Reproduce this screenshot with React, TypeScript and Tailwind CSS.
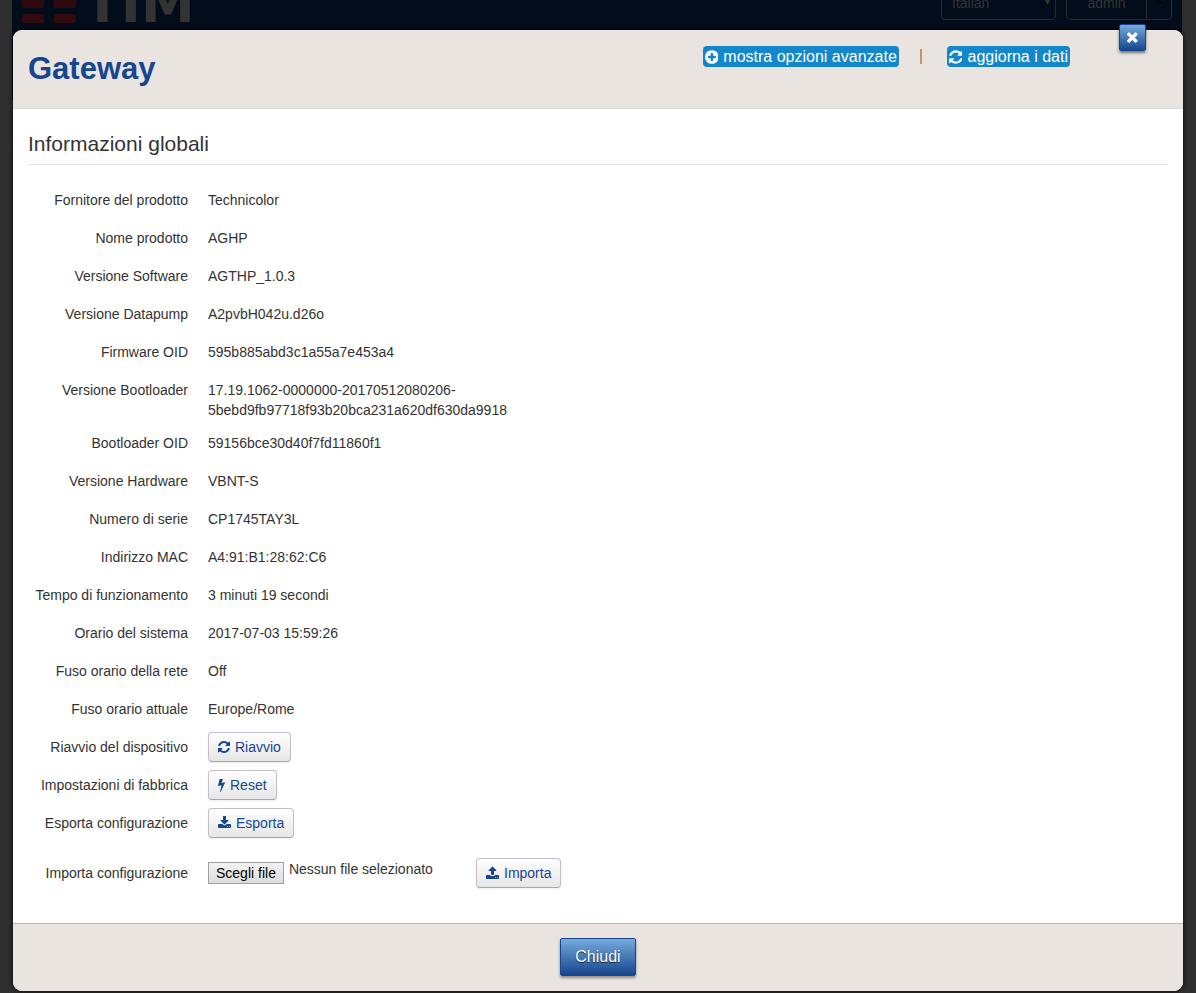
import type { ReactNode } from "react";

const ICONS = {
  refresh: {
    w: 1536,
    d: "M1511 1056q0 5-1 7-64 268-268 434.5t-478 166.5q-146 0-282.5-55t-243.5-157l-129 129q-19 19-45 19t-45-19-19-45v-448q0-26 19-45t45-19h448q26 0 45 19t19 45-19 45l-137 137q71 66 161 102t187 36q134 0 250-65t186-179q11-17 53-117 8-23 30-23h192q13 0 22.5 9.5t9.5 22.5zm25-800v448q0 26-19 45t-45 19h-448q-26 0-45-19t-19-45 19-45l138-138q-148-137-349-137-134 0-250 65t-186 179q-11 17-53 117-8 23-30 23h-199q-13 0-22.5-9.5t-9.5-22.5v-7q65-268 270-434.5t480-166.5q146 0 284 55.5t245 156.5l130-129q19-19 45-19t45 19 19 45z",
  },
  plus: {
    w: 1536,
    d: "M1216 960v-128q0-26-19-45t-45-19h-256v-256q0-26-19-45t-45-19h-128q-26 0-45 19t-19 45v256h-256q-26 0-45 19t-19 45v128q0 26 19 45t45 19h256v256q0 26 19 45t45 19h128q26 0 45-19t19-45v-256h256q26 0 45-19t19-45zm320-64q0 209-103 385.5t-279.5 279.5-385.5 103-385.5-103-279.5-279.5-103-385.5 103-385.5 279.5-279.5 385.5-103 385.5 103 279.5 279.5 103 385.5z",
  },
  times: {
    w: 1408,
    d: "M1298 1322q0 40-28 68l-136 136q-28 28-68 28t-68-28l-294-294-294 294q-28 28-68 28t-68-28l-136-136q-28-28-28-68t28-68l294-294-294-294q-28-28-28-68t28-68l136-136q28-28 68-28t68 28l294 294 294-294q28-28 68-28t68 28l136 136q28 28 28 68t-28 68l-294 294 294 294q28 28 28 68z",
  },
  bolt: {
    w: 896,
    d: "M885 566q18 20 7 44l-540 1157q-13 25-42 25-4 0-14-2-17-5-25.5-19t-4.5-30l197-808-406 101q-4 1-12 1-18 0-31-11-18-15-13-39l201-825q4-14 16-23t28-9h328q19 0 32 12.5t13 29.5q0 8-5 18l-171 463 396-98q8-2 12-2 19 0 34 15z",
  },
  download: {
    w: 1664,
    d: "M1280 1344q0-26-19-45t-45-19-45 19-19 45 19 45 45 19 45-19 19-45zm256 0q0-26-19-45t-45-19-45 19-19 45 19 45 45 19 45-19 19-45zm128-224v320q0 40-28 68t-68 28h-1472q-40 0-68-28t-28-68v-320q0-40 28-68t68-28h465l135 136q58 56 136 56t136-56l136-136h464q40 0 68 28t28 68zm-325-569q17 41-14 70l-448 448q-18 19-45 19t-45-19l-448-448q-31-29-14-70 17-39 59-39h256v-448q0-26 19-45t45-19h256q26 0 45 19t19 45v448h256q42 0 59 39z",
  },
  upload: {
    w: 1664,
    d: "M1280 1472q0-26-19-45t-45-19-45 19-19 45 19 45 45 19 45-19 19-45zm256 0q0-26-19-45t-45-19-45 19-19 45 19 45 45 19 45-19 19-45zm128-224v320q0 40-28 68t-68 28h-1472q-40 0-68-28t-28-68v-320q0-40 28-68t68-28h427q21 56 70.5 92t110.5 36h256q61 0 110.5-36t70.5-92h427q40 0 68 28t28 68zm-325-648q-17 40-59 40h-256v448q0 26-19 45t-45 19h-256q-26 0-45-19t-19-45v-448h-256q-42 0-59-40-17-39 14-69l448-448q18-19 45-19t45 19l448 448q31 30 14 69z",
  },
};

type IconName = keyof typeof ICONS;

function Icon({ name, className }: { name: IconName; className: string }) {
  const icon = ICONS[name];
  return (
    <svg viewBox={`0 0 ${icon.w} 1792`} fill="currentColor" aria-hidden="true" className={`w-auto shrink-0 ${className}`}>
      <path d={icon.d} />
    </svg>
  );
}

const INFO: [string, string[]][] = [
  ["Fornitore del prodotto", ["Technicolor"]],
  ["Nome prodotto", ["AGHP"]],
  ["Versione Software", ["AGTHP_1.0.3"]],
  ["Versione Datapump", ["A2pvbH042u.d26o"]],
  ["Firmware OID", ["595b885abd3c1a55a7e453a4"]],
  ["Versione Bootloader", ["17.19.1062-0000000-20170512080206-", "5bebd9fb97718f93b20bca231a620df630da9918"]],
  ["Bootloader OID", ["59156bce30d40f7fd11860f1"]],
  ["Versione Hardware", ["VBNT-S"]],
  ["Numero di serie", ["CP1745TAY3L"]],
  ["Indirizzo MAC", ["A4:91:B1:28:62:C6"]],
  ["Tempo di funzionamento", ["3 minuti 19 secondi"]],
  ["Orario del sistema", ["2017-07-03 15:59:26"]],
  ["Fuso orario della rete", ["Off"]],
  ["Fuso orario attuale", ["Europe/Rome"]],
];

function Row({ label, htmlFor, children }: { label: string; htmlFor?: string; children: ReactNode }) {
  return (
    <div className="mb-2 flex min-h-[30px] gap-5">
      {htmlFor ? (
        <label htmlFor={htmlFor} className="w-40 shrink-0 pt-[5px] text-right">{label}</label>
      ) : (
        <span className="w-40 shrink-0 pt-[5px] text-right">{label}</span>
      )}
      {children}
    </div>
  );
}

function ActionButton({ id, icon, children }: { id?: string; icon: IconName; children: ReactNode }) {
  return (
    <button
      id={id}
      type="button"
      className="flex h-[30px] items-center gap-[5px] rounded-[4px] border border-[#c6bccb] border-b-[#ae9fb5] bg-linear-to-b from-white to-[#e6e6e6] px-[9px] text-[#17468f] shadow-[0_1px_2px_rgba(0,0,0,0.08)]"
    >
      <Icon name={icon} className="h-[14px]" />
      {children}
    </button>
  );
}

function HeaderLink({ icon, children }: { icon: IconName; children: ReactNode }) {
  return (
    <a href="#" className="flex h-[21px] items-center gap-[5px] rounded-[4px] bg-[#1387c9] px-[2px] text-[16px] leading-5 text-white">
      <Icon name={icon} className="h-4" />
      {children}
    </a>
  );
}

function Backdrop() {
  return (
    <header className="absolute top-0 right-[14px] left-3 mx-auto h-[100px] max-w-[1170px] bg-[#030c1a] text-[14px] text-[#333]">
      <div className="flex h-[30px] items-end justify-between overflow-hidden px-[10px]">
        <div className="flex items-end gap-2 pb-[7px]">
          <svg viewBox="0 0 54 43" className="h-[43px] w-[54px]" fill="#300b0e" aria-hidden="true">
            <path d="M3 0H22V8H0V3Q0 0 3 0ZM32 0H51Q54 0 54 3V8H32ZM0 14H22V25Q22 28 19 28H3Q0 28 0 25ZM32 14H54V25Q54 28 51 28H32ZM3 34H22V43H3Q0 43 0 40V37Q0 34 3 34ZM32 34H51Q54 34 54 37V40Q54 43 51 43H32Z" />
          </svg>
          <span className="h-[46px] font-['DejaVu_Sans',sans-serif] text-[54px] leading-[54px] font-bold">TIM</span>
        </div>
        <div className="flex items-end gap-[10px] pb-[10px]">
          <div className="relative">
            <select aria-label="Lingua" className="h-[34px] w-[115px] appearance-none rounded-[4px] border border-[#27292c] bg-transparent pl-[10px]">
              <option>Italian</option>
            </select>
            <span className="pointer-events-none absolute right-1 bottom-[12px] text-[9px] leading-3">▼</span>
          </div>
          <div className="flex h-[34px] rounded-[4px] border border-[#27292c]">
            <button type="button" className="w-20 border-r border-[#27292c]">admin</button>
            <button type="button" aria-label="Menu utente" className="flex w-6 items-center justify-center text-black">
              <svg viewBox="0 0 8 4" className="h-1 w-2" fill="currentColor"><path d="M0 0H8L4 4Z" /></svg>
            </button>
          </div>
        </div>
      </div>
    </header>
  );
}

export default function App() {
  return (
    <div className="relative min-h-screen bg-[#2f2f2f] px-3 pt-[30px] pb-[2px] font-['Liberation_Sans',Arial,sans-serif] text-[14px] leading-5 text-[#333]">
      <Backdrop />
      <main
        role="dialog"
        aria-labelledby="title"
        className="relative mx-auto max-w-[1170px] rounded-[9px] bg-white shadow-[0_0_5px_rgba(0,0,0,0.9)]"
      >
        <div className="flex h-[79px] items-start justify-between rounded-t-[9px] border-b border-[#dcdad9] bg-[#e9e4e0] pr-[113px] pl-[15px]">
          <h1 id="title" className="pt-[19px] text-[31px] leading-10 font-bold text-[#17468f]">Gateway</h1>
          <div className="flex items-center pt-4">
            <HeaderLink icon="plus">mostra opzioni avanzate</HeaderLink>
            <span className="mr-[25px] ml-[21px] h-[15px] w-[2px] bg-[#c09670]" />
            <HeaderLink icon="refresh">aggiorna i dati</HeaderLink>
          </div>
        </div>
        <button
          type="button"
          aria-label="Chiudi finestra"
          className="absolute -top-[6px] right-[37px] flex size-[27px] items-center justify-center rounded-[2px] border border-[#17468f] bg-linear-to-b from-[#76acdc] to-[#17468f] pb-px text-white shadow-[0_2px_3px_rgba(0,0,0,0.5)]"
        >
          <Icon name="times" className="h-4" />
        </button>

        <section className="px-[15px] pt-[15px] pb-[27px]">
          <h2 className="mb-5 border-b border-[#e5e5e5] text-[21px] leading-10">Informazioni globali</h2>
          {INFO.map(([label, lines]) => (
            <Row key={label} label={label}>
              <div className="pt-[5px]">
                {lines.map((line) => (
                  <p key={line}>{line}</p>
                ))}
              </div>
            </Row>
          ))}
          <Row label="Riavvio del dispositivo" htmlFor="reboot">
            <ActionButton id="reboot" icon="refresh">Riavvio</ActionButton>
          </Row>
          <Row label="Impostazioni di fabbrica" htmlFor="reset">
            <ActionButton id="reset" icon="bolt">Reset</ActionButton>
          </Row>
          <Row label="Esporta configurazione" htmlFor="export">
            <ActionButton id="export" icon="download">Esporta</ActionButton>
          </Row>
          <div className="pt-3">
            <Row label="Importa configurazione" htmlFor="config">
              <div className="flex w-[248px] items-start gap-[5px]">
                <input id="config" type="file" className="peer sr-only" />
                <label
                  htmlFor="config"
                  className="mt-1 flex h-[22px] items-center border border-[#a0a0a0] bg-linear-to-b from-[#f3f3f3] to-[#dddddd] px-[7px] text-black peer-focus-visible:outline"
                >
                  Scegli file
                </label>
                <span className="pt-px">Nessun file selezionato</span>
              </div>
              <ActionButton icon="upload">Importa</ActionButton>
            </Row>
          </div>
        </section>

        <footer className="flex justify-center rounded-b-[9px] border-t border-[#b5b5b5] bg-[#e9e4e0] pt-[14px] pb-[15px]">
          <button
            type="button"
            className="h-[38px] rounded-[2px] border border-[#17468f] bg-linear-to-b from-[#76acdc] to-[#17468f] px-[14px] text-[16px] text-white shadow-[0_2px_3px_rgba(0,0,0,0.4)] text-shadow-[0_1px_1px_rgba(0,0,0,0.7)]"
          >
            Chiudi
          </button>
        </footer>
      </main>
    </div>
  );
}
